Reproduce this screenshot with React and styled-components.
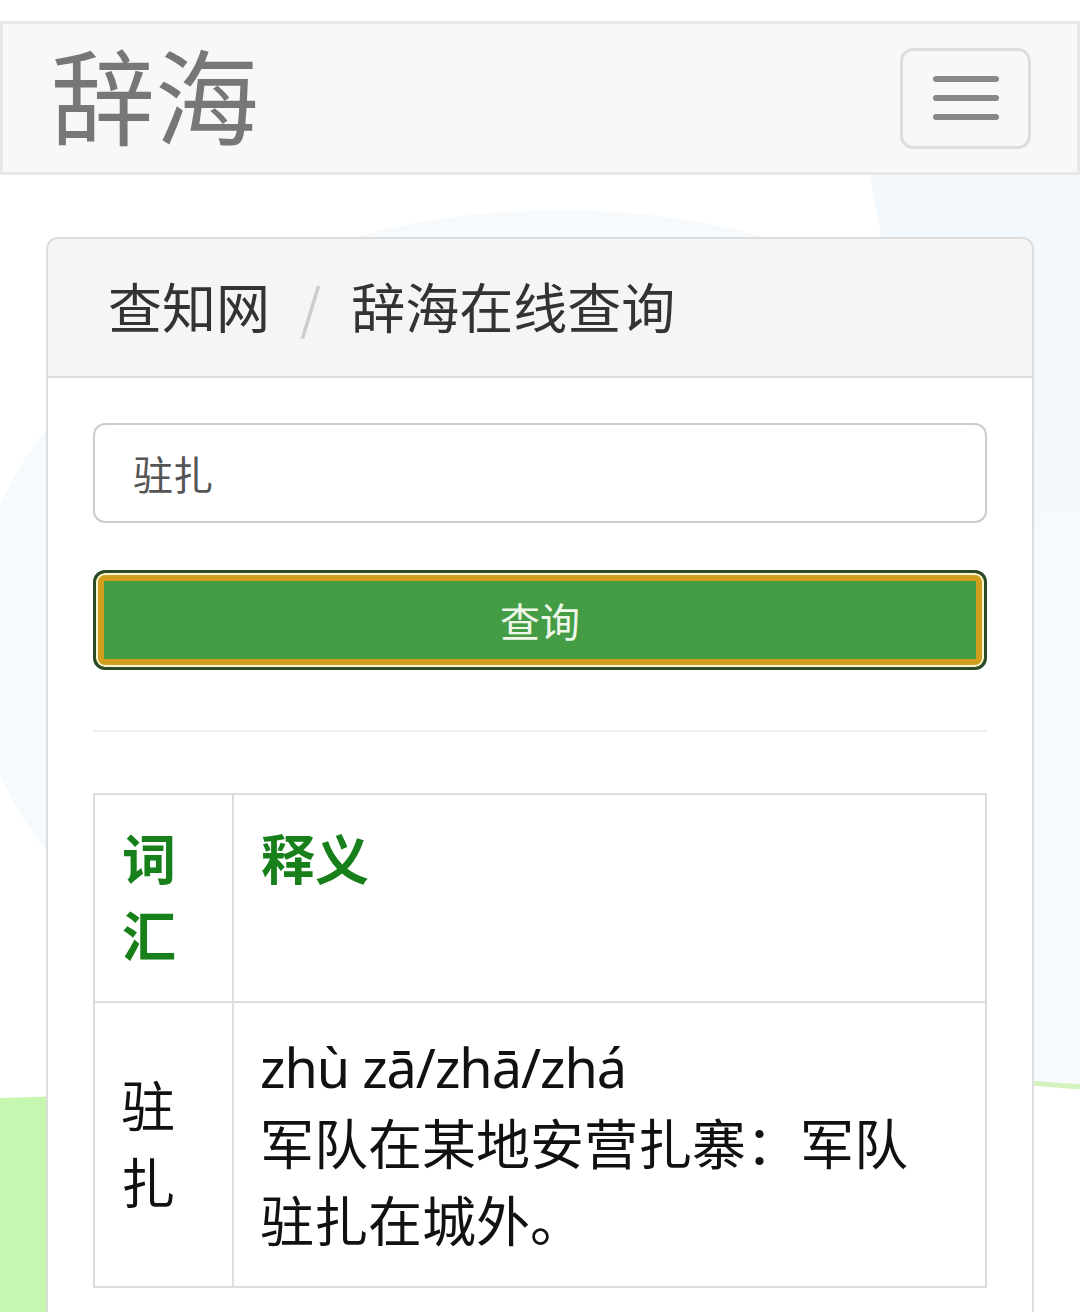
import React from 'react'
import styled, { createGlobalStyle } from 'styled-components'

const GlobalStyle = createGlobalStyle`
  body {
    margin: 0;
    background: #fff;
    font-family: "Noto Sans", "Noto Sans CJK SC", sans-serif;
  }
  * { box-sizing: border-box; }
`

const Page = styled.div`
  position: relative;
  min-height: 1312px;
  overflow: hidden;
  padding-top: 21px;
`

const Backdrop = styled.svg`
  position: absolute;
  top: 0;
  left: 0;
  width: 1080px;
  height: 1312px;
  z-index: 0;
`

const Navbar = styled.nav`
  position: relative;
  z-index: 1;
  display: flex;
  align-items: center;
  justify-content: space-between;
  height: 154px;
  padding: 0 46px 0 48px;
  background: #f8f8f8;
  border: 3px solid #e7e7e7;
`

const Brand = styled.a`
  font-family: "Noto Sans CJK SC", sans-serif;
  font-size: 104px;
  line-height: 1;
  color: #777;
  text-decoration: none;
  margin-top: -10px;
`

const Toggle = styled.button`
  width: 131px;
  height: 101px;
  display: flex;
  flex-direction: column;
  align-items: center;
  justify-content: center;
  gap: 13px;
  background: transparent;
  border: 3px solid #ddd;
  border-radius: 13px;
  padding: 0;
`

const Bar = styled.span`
  display: block;
  width: 66px;
  height: 6px;
  border-radius: 3px;
  background: #888;
`

const Panel = styled.section`
  position: relative;
  z-index: 1;
  margin: 62px 46px 0 46px;
  background: #fff;
  border: 2px solid #ddd;
  border-bottom: none;
  border-radius: 12px 12px 0 0;
  min-height: 1100px;
`

const PanelHeading = styled.div`
  height: 139px;
  display: flex;
  align-items: center;
  padding: 0 60px 4px;
  background: #f5f5f5;
  border-bottom: 2px solid #ddd;
  border-radius: 10px 10px 0 0;
  font-family: "Noto Sans CJK SC", sans-serif;
  font-size: 54px;
  color: #333;
`

const Crumb = styled.span`
  line-height: 1;
`

const Divider = styled.span`
  color: #ccc;
  padding: 0 30px;
  line-height: 1;
`

const PanelBody = styled.div`
  padding: 45px 45px 0;
`

const SearchInput = styled.input`
  display: block;
  width: 100%;
  height: 100px;
  padding: 0 38px;
  border: 2px solid #ccc;
  border-radius: 12px;
  font-family: "Noto Sans CJK SC", sans-serif;
  font-size: 40px;
  color: #555;
  background: #fff;
  outline: none;
`

const SearchButton = styled.button`
  display: block;
  width: 100%;
  height: 100px;
  margin-top: 47px;
  border: 3px solid #2c4a27;
  border-radius: 12px;
  background: #449d44;
  box-shadow: inset 0 0 0 2px #fdf6d2, inset 0 0 0 8px #d39e1f;
  color: #eef7ea;
  font-family: "Noto Sans CJK SC", sans-serif;
  font-size: 40px;
  padding: 0;
`

const Rule = styled.hr`
  margin: 60px 0 61px;
  border: 0;
  border-top: 2px solid #eee;
`

const Table = styled.table`
  width: 100%;
  border-collapse: collapse;
  border: 2px solid #ddd;
  font-family: "Noto Sans", "Noto Sans CJK SC", sans-serif;
  font-size: 54px;
  line-height: 77px;
`

const Th = styled.th`
  text-align: left;
  vertical-align: top;
  padding: 26px 27px;
  border: 2px solid #ddd;
  color: #17801a;
  font-weight: 700;
  width: ${p => (p.$narrow ? '139px' : 'auto')};
`

const Td = styled.td`
  vertical-align: middle;
  padding: 26px 27px 26px 26px;
  border: 2px solid #ddd;
  color: #111;
  font-weight: 400;
`

const Pinyin = styled.span`
  letter-spacing: -1px;
`

export default function App() {
  return (
    <Page>
      <GlobalStyle />
      <Backdrop viewBox="0 0 1080 1312">
        <defs>
          <linearGradient id="sky" x1="0" y1="0" x2="0" y2="1">
            <stop offset="0" stopColor="#f2f8fc" />
            <stop offset="1" stopColor="#f8fbfd" />
          </linearGradient>
        </defs>
        <ellipse cx="560" cy="640" rx="590" ry="430" fill="#f6fafd" />
        <polygon points="870,175 1080,175 1080,1084 1033,1084" fill="url(#sky)" />
        <polygon points="0,1098 70,1096 70,1312 0,1312" fill="#c6f7b1" />
        <line x1="1030" y1="1083" x2="1080" y2="1087" stroke="#d3f2bd" strokeWidth="5" />
      </Backdrop>

      <Navbar>
        <Brand href="#">辞海</Brand>
        <Toggle aria-label="menu">
          <Bar />
          <Bar />
          <Bar />
        </Toggle>
      </Navbar>

      <Panel>
        <PanelHeading>
          <Crumb>查知网</Crumb>
          <Divider>/</Divider>
          <Crumb>辞海在线查询</Crumb>
        </PanelHeading>
        <PanelBody>
          <SearchInput defaultValue="驻扎" />
          <SearchButton>查询</SearchButton>
          <Rule />
          <Table>
            <thead>
              <tr>
                <Th $narrow>词汇</Th>
                <Th>释义</Th>
              </tr>
            </thead>
            <tbody>
              <tr>
                <Td>驻扎</Td>
                <Td>
                  <Pinyin>zhù zā/zhā/zhá</Pinyin>
                  <br />
                  军队在某地安营扎寨：军队驻扎在城外。
                </Td>
              </tr>
            </tbody>
          </Table>
        </PanelBody>
      </Panel>
    </Page>
  )
}
